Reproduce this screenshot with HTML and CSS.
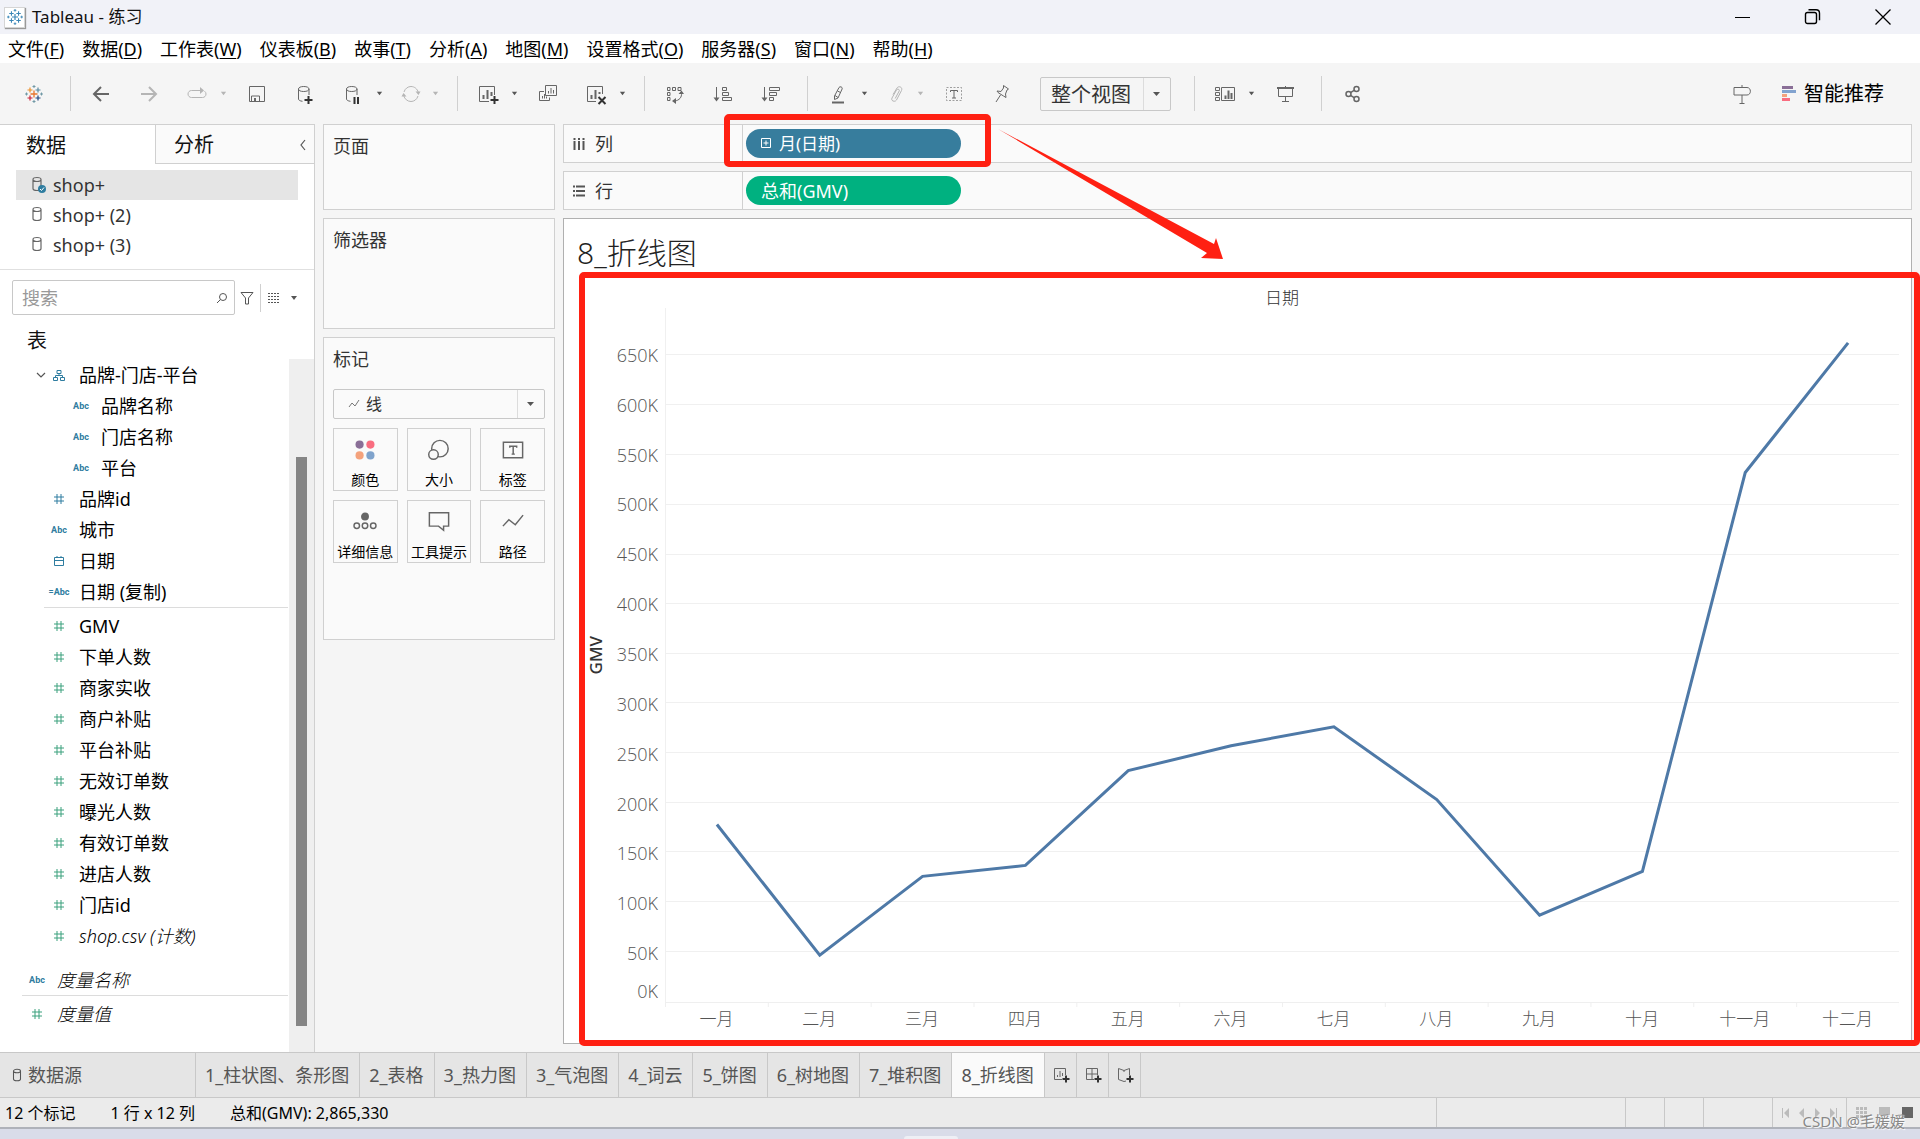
FILE: index.html
```html
<!DOCTYPE html>
<html lang="zh-CN">
<head>
<meta charset="utf-8">
<title>Tableau - 练习</title>
<link rel="stylesheet" href="styles.css">
</head>
<body>
<svg class="defs" aria-hidden="true">
  <symbol id="caret" viewBox="0 0 8 8"><path d="M1 2h6L4 6z" fill="currentColor"/></symbol>
  <symbol id="hash" viewBox="0 0 12 12"><path d="M4 1v10M8 1v10M1 4h10M1 8h10" fill="none" stroke="currentColor"/></symbol>
  <symbol id="db" viewBox="0 0 12 16"><path d="M2 3.5v9c0 1 1.500 2 4 2s4-1 4-2v-9M2 3.500C2 2.500 3.500 1.500 6 1.500s4 1 4 2-1.500 2-4 2-4-1-4-2z" fill="none" stroke="currentColor" stroke-width="1.200"/></symbol>
  <symbol id="logo" viewBox="0 0 18 18"><path d="M9 5.500v7M5.500 9h7" stroke="var(--c1)" stroke-width="1.300"/><path d="M5 2.500v5M2.500 5h5" stroke="var(--c2)" stroke-width="1.200"/><path d="M13 2.500v5M10.500 5h5" stroke="var(--c3)" stroke-width="1.200"/><path d="M5 10.500v5M2.500 13h5" stroke="var(--c4)" stroke-width="1.200"/><path d="M13 10.500v5M10.500 13h5" stroke="var(--c5)" stroke-width="1.200"/><path d="M9 0v3M7.500 1.500h3M9 15v3M7.500 16.500h3M1.500 7.500v3M0 9h3M16.500 7.500v3M15 9h3" stroke="var(--c6)"/></symbol>
</svg>

<header class="titlebar">
  <span class="app-icon"><svg width="16" height="16"><use href="#logo"/></svg></span>
  <span class="app-title">Tableau - 练习</span>
  <div class="window-buttons">
    <button aria-label="最小化"><svg width="18" height="18"><path d="M1 9.500h15" fill="none" stroke="#000"/></svg></button>
    <button aria-label="还原"><svg width="18" height="18"><rect x="1.500" y="4.500" width="11" height="11" rx="2" fill="none" stroke="#000" stroke-width="1.400"/><path d="M4.500 1.800h7.500c2 0 3.500 1.500 3.500 3.500v7" fill="none" stroke="#000" stroke-width="1.400"/></svg></button>
    <button aria-label="关闭"><svg width="18" height="18"><path d="M1.500 1.500l15 15M16.500 1.500l-15 15" fill="none" stroke="#000" stroke-width="1.300"/></svg></button>
  </div>
</header>

<nav class="menu">
  <a href="#">文件(<u>F</u>)</a><a href="#">数据(<u>D</u>)</a><a href="#">工作表(<u>W</u>)</a><a href="#">仪表板(<u>B</u>)</a><a href="#">故事(<u>T</u>)</a><a href="#">分析(<u>A</u>)</a><a href="#">地图(<u>M</u>)</a><a href="#">设置格式(<u>O</u>)</a><a href="#">服务器(<u>S</u>)</a><a href="#">窗口(<u>N</u>)</a><a href="#">帮助(<u>H</u>)</a>
</nav>

<div class="toolbar">
  <button class="tool color-logo" aria-label="起始页"><svg width="18" height="18"><use href="#logo"/></svg></button>
  <span class="sep"></span>
  <button class="tool" aria-label="撤消"><svg viewBox="0 0 24 24"><path d="M20 12H5M12 5l-7 7 7 7" stroke-width="2"/></svg></button>
  <button class="tool off" aria-label="重做"><svg viewBox="0 0 24 24"><path d="M4 12h15M12 5l7 7-7 7" stroke-width="2"/></svg></button>
  <button class="tool off" aria-label="重播"><svg viewBox="0 0 24 24"><path d="M16 8.500H6.500C4.500 8.500 3 10 3 12s1.500 3.500 3.500 3.500h11c2 0 3.500-1.500 3.500-3.500 0-1.200-.5-2-1.500-2.800"/><path class="fill" d="M15 5l4 3.500-4 3.500z"/></svg></button>
  <button class="drop off" aria-label="重播选项"><svg><use href="#caret"/></svg></button>
  <button class="tool" aria-label="保存"><svg viewBox="0 0 24 24"><path d="M4.500 4.500h15v15h-15zM6.500 19v-5h8v5"/><path class="fill" d="M9 16h2v3H9z"/></svg></button>
  <button class="tool" aria-label="新建数据源"><svg viewBox="0 0 24 24"><path d="M5.500 7v10c0 1.200 1.500 2 4 2.300M16 7v6M5.500 7c0-1.500 2-2.500 5.200-2.500S16 5.500 16 7s-2 2.500-5.300 2.500S5.500 8.500 5.500 7z"/><path class="dark" d="M15.500 14v8M11.500 18h8"/></svg></button>
  <button class="tool" aria-label="暂停自动更新"><svg viewBox="0 0 24 24"><path d="M5.500 7v10c0 1.200 1.500 2 4 2.300M16 7v6M5.500 7c0-1.500 2-2.500 5.200-2.500S16 5.500 16 7s-2 2.500-5.300 2.500S5.500 8.500 5.500 7z"/><path class="dark" d="M13.500 15v7M17 15v7"/></svg></button>
  <button class="drop" aria-label="更新选项"><svg><use href="#caret"/></svg></button>
  <button class="tool narrow off" aria-label="刷新"><svg viewBox="0 0 24 24"><path d="M5 10c1-3.500 4-5.500 7-5.500 3.500 0 6.500 2.500 7.300 6M19 14c-1 3.500-4 5.500-7 5.500-3.500 0-6.500-2.500-7.300-6"/><path class="fill" d="M16.500 9.500h5L19.500 13zM2.500 14.500h5L4.500 11z"/></svg></button>
  <button class="drop off" aria-label="刷新选项"><svg><use href="#caret"/></svg></button>
  <span class="sep"></span>
  <button class="tool" aria-label="新建工作表"><svg viewBox="0 0 24 24"><path d="M18.500 13V4.500h-15v15H13"/><path d="M7.500 17v-4M11.500 17V8M15.500 14v-4" stroke-width="2"/><path class="dark" d="M18.500 14v8M14.500 18h8"/></svg></button>
  <button class="drop" aria-label="新建选项"><svg><use href="#caret"/></svg></button>
  <button class="tool" aria-label="复制"><svg viewBox="0 0 24 24"><path d="M9.500 3.500h11v10h-11zM8 9.500H3.500v9h10v-3M12.500 11.500V9M15 11.500V6M17.500 11.500V8M6.500 16.500V14M8.500 16.500V12M10.500 16.500v-2"/></svg></button>
  <button class="tool" aria-label="清除工作表"><svg viewBox="0 0 24 24"><path d="M18.500 12V4.500h-15v15H12"/><path d="M7.500 17v-4M11.500 17V8M15.500 12v-2" stroke-width="2"/><path class="dark" d="M14.500 15l7 7M21.500 15l-7 7"/></svg></button>
  <button class="drop" aria-label="清除选项"><svg><use href="#caret"/></svg></button>
  <span class="sep"></span>
  <button class="tool" aria-label="交换行和列"><svg viewBox="0 0 24 24"><path d="M4.500 5.500h2.500v3H4.500zM9.500 5.500h3v3h-3zM15 5.500h3v3h-3zM4.500 10.500h2.500v3H4.500zM4.500 15.500h2.500v3H4.500zM18.500 11c.5 4-2 7.500-7 8"/><path class="fill" d="M15.500 12l3-3.500 2.500 3.500zM13 16l-4 3 4 3z"/></svg></button>
  <button class="tool" aria-label="升序排序"><svg viewBox="0 0 24 24"><path d="M5.500 5v12M11.500 5.500h4v3h-4zM11.500 10.500h6v3h-6zM11.500 15.500h9v3h-9z"/><path class="fill" d="M2.500 15.500h6l-3 4z"/></svg></button>
  <button class="tool" aria-label="降序排序"><svg viewBox="0 0 24 24"><path d="M5.500 5v12M10.500 5.500h10v3h-10zM10.500 10.500h7v3h-7zM10.500 15.500h4v3h-4z"/><path class="fill" d="M2.500 15.500h6l-3 4z"/></svg></button>
  <span class="sep"></span>
  <button class="tool" aria-label="突出显示"><svg viewBox="0 0 24 24"><path d="M8.500 14L13 5.500c.8-1.500 3.800-.5 3.200 1.300L12 16l-3.500 1.500zM9 13.500l3 2M11.500 9l3 1.500"/><path d="M6 20.500h12" stroke-width="2"/></svg></button>
  <button class="drop" aria-label="突出显示选项"><svg><use href="#caret"/></svg></button>
  <button class="tool narrow off" aria-label="组成员"><svg viewBox="0 0 24 24"><path d="M9 12.500l4-6.500c1.500-2.500 6-1 4.500 2.500L12.500 18c-1.500 2.500-6 1-4.500-2l4.500-8c1-1.800 3.500-.5 2.700 1l-4 7.500"/></svg></button>
  <button class="drop off" aria-label="组选项"><svg><use href="#caret"/></svg></button>
  <button class="tool" aria-label="显示标记标签"><svg viewBox="0 0 24 24"><path d="M4.500 5.500h15v13h-15z" stroke-dasharray="2 1.500" opacity=".6"/><path d="M8.500 10V8.500h7V10M12 8.500V16M10 16h4"/></svg></button>
  <button class="tool" aria-label="固定轴"><svg viewBox="0 0 24 24"><path d="M13.500 3.500l5 3.500-1.500 1-1.500 4 .5 3.500-2.500-1.500-5.500-3.500L7 9l4 .5L13.500 6zM10.500 13L6 20"/></svg></button>
  <select class="fit" aria-label="适合"><option>整个视图</option></select>
  <span class="sep"></span>
  <button class="tool" aria-label="显示/隐藏卡"><svg viewBox="0 0 24 24"><path d="M8.500 5.500h13v13h-13zM2.500 5.500h4v3h-4zM2.500 10.500h4v3h-4zM2.500 15.500h4v3h-4z"/><path d="M12.500 17v-3.500M15.500 17V8.500M18.500 17v-6" stroke-width="2"/></svg></button>
  <button class="drop" aria-label="卡选项"><svg><use href="#caret"/></svg></button>
  <button class="tool" aria-label="演示模式"><svg viewBox="0 0 24 24"><path d="M5.500 6v8.500h14V6M12.500 14.500V20M9 19.500h7M12.500 4v2"/><path d="M4 6h17" stroke-width="2"/></svg></button>
  <span class="sep"></span>
  <button class="tool" aria-label="共享"><svg viewBox="0 0 24 24"><g stroke-width="1.500"><circle cx="8.500" cy="12" r="2.500"/><circle cx="16.500" cy="7" r="2.500"/><circle cx="16.500" cy="17" r="2.500"/><path d="M10.500 10.700l4-2.500M10.500 13.300l4 2.500"/></g></svg></button>
  <button class="tool guide" aria-label="指南"><svg viewBox="0 0 24 24"><path d="M12 3v2M4 5.500h13c4.500 0 4.500 7.500 0 7.500H4zM12 13v8M9.500 21.500h5"/></svg></button>
  <button class="showme"><svg width="16" height="16"><path fill="#8a6f97" d="M0 0h11v3H0z"/><path fill="#82a3cf" d="M0 4h14v3H0z"/><path fill="#f4a27c" d="M0 8h5v3H0z"/><path fill="#f96d80" d="M0 12h8v3H0z"/></svg>智能推荐</button>
</div>

<main class="workspace">
  <aside class="side">
    <div class="side-tabs">
      <button class="side-tab active">数据</button>
      <button class="side-tab">分析<svg width="8" height="12"><path d="M6 1L2 6l4 5" fill="none" stroke="#555" stroke-width="1.200"/></svg></button>
    </div>
    <ul class="sources">
      <li class="selected"><svg width="16" height="18"><use href="#db" width="12" height="16"/><circle cx="11" cy="13" r="4" fill="#2f7da0"/><path d="M9 13l1.500 1.500 2.500-3" fill="none" stroke="#fff"/></svg>shop+</li>
      <li><svg width="16" height="18"><use href="#db" width="12" height="16"/></svg>shop+ (2)</li>
      <li><svg width="16" height="18"><use href="#db" width="12" height="16"/></svg>shop+ (3)</li>
    </ul>
    <div class="search-row">
      <label class="search"><input type="text" placeholder="搜索" aria-label="搜索"><svg width="12" height="12"><circle cx="7" cy="5" r="3.500" fill="none" stroke="#555"/><path d="M4.500 7.500L1 11" stroke="#555"/></svg></label>
      <button class="mini" aria-label="筛选"><svg width="14" height="14"><path d="M1 1.500h12L8.500 7v6h-3V7z" fill="none" stroke="#555"/></svg></button>
      <button class="mini layout" aria-label="查看方式"><svg width="12" height="12"><path d="M0 1.500h12M0 4.500h12M0 7.500h12M0 10.500h12" stroke="#555" stroke-dasharray="2 1"/></svg><svg class="tri"><use href="#caret"/></svg></button>
    </div>
    <h2>表</h2>
    <div class="fields">
      <ul class="field-list">
        <li class="folder"><svg class="chev" viewBox="0 0 12 12"><path d="M2 4l4 4 4-4" fill="none" stroke="#555" stroke-width="1.200"/></svg><span class="ico"><svg viewBox="0 0 12 12"><path d="M4 1.500h4v3H4zM.5 8.500h4v3h-4zM7.500 8.500h4v3h-4zM6 4.500v2M2.500 8.500v-2h7v2" fill="none" stroke="currentColor"/></svg></span>品牌-门店-平台</li>
        <li class="child"><span class="ico">Abc</span>品牌名称</li>
        <li class="child"><span class="ico">Abc</span>门店名称</li>
        <li class="child"><span class="ico">Abc</span>平台</li>
        <li><span class="ico"><svg><use href="#hash"/></svg></span>品牌id</li>
        <li><span class="ico">Abc</span>城市</li>
        <li><span class="ico"><svg viewBox="0 0 12 12"><path d="M1.500 2.500h9v8h-9zM1.500 5.500h9M4 1v2M8 1v2" fill="none" stroke="currentColor"/></svg></span>日期</li>
        <li><span class="ico">=Abc</span>日期 (复制)</li>
        <li class="rule" role="separator"></li>
        <li class="num"><span class="ico"><svg><use href="#hash"/></svg></span>GMV</li>
        <li class="num"><span class="ico"><svg><use href="#hash"/></svg></span>下单人数</li>
        <li class="num"><span class="ico"><svg><use href="#hash"/></svg></span>商家实收</li>
        <li class="num"><span class="ico"><svg><use href="#hash"/></svg></span>商户补贴</li>
        <li class="num"><span class="ico"><svg><use href="#hash"/></svg></span>平台补贴</li>
        <li class="num"><span class="ico"><svg><use href="#hash"/></svg></span>无效订单数</li>
        <li class="num"><span class="ico"><svg><use href="#hash"/></svg></span>曝光人数</li>
        <li class="num"><span class="ico"><svg><use href="#hash"/></svg></span>有效订单数</li>
        <li class="num"><span class="ico"><svg><use href="#hash"/></svg></span>进店人数</li>
        <li class="num"><span class="ico"><svg><use href="#hash"/></svg></span>门店id</li>
        <li class="num"><span class="ico"><svg><use href="#hash"/></svg></span><i>shop.csv (计数)</i></li>
        <li class="meta first"><span class="ico">Abc</span><i>度量名称</i></li>
        <li class="rule wide" role="separator"></li>
        <li class="meta num"><span class="ico"><svg><use href="#hash"/></svg></span><i>度量值</i></li>
      </ul>
      <div class="scrollbar"><div class="thumb"></div></div>
    </div>
  </aside>

  <div class="cards">
    <section class="card pages"><h3>页面</h3></section>
    <section class="card filters"><h3>筛选器</h3></section>
    <section class="card marks">
      <h3>标记</h3>
      <div class="mark-type">
        <svg width="12" height="10"><path d="M1 8l3-4 3 3 4-6" fill="none" stroke="#777"/></svg>
        <select aria-label="标记类型"><option>线</option></select>
      </div>
      <div class="mark-grid">
        <button><svg viewBox="0 0 24 24"><g stroke="none"><circle cx="5.500" cy="5.500" r="4.900" fill="#8a6f97"/><circle cx="18.500" cy="5.500" r="4.900" fill="#f96d80"/><circle cx="5.500" cy="18.500" r="4.900" fill="#f4a27c"/><circle cx="18.500" cy="18.500" r="4.900" fill="#7fa3cc"/></g></svg>颜色</button>
        <button><svg viewBox="0 0 24 24"><circle cx="13" cy="10.500" r="9"/><circle cx="6" cy="17" r="5.200" fill="#fafafa"/></svg>大小</button>
        <button><svg viewBox="0 0 24 24"><path d="M1.500 3.500h21v17h-21zM8.500 9.500V8h7.500v1.500M12.200 8v8.500M10.500 16.500h3.500"/></svg>标签</button>
        <button><svg viewBox="0 0 24 24"><circle cx="12" cy="6" r="3.500" fill="#666"/><circle cx="3" cy="16" r="3"/><circle cx="12" cy="16" r="3"/><circle cx="21" cy="16" r="3"/></svg>详细信息</button>
        <button><svg viewBox="0 0 24 24"><path d="M1.500 2h21v14.500h-5.500v4.500l-5.500-4.500h-10z"/></svg>工具提示</button>
        <button><svg viewBox="0 0 24 24"><path d="M1 16.500l6.500-7 7 5.500L23 4.500"/></svg>路径</button>
      </div>
    </section>
  </div>

  <div class="sheet">
    <div class="shelf">
      <div class="shelf-name"><svg width="12" height="12"><path d="M1.500 0v2M1.500 3v9M6 0v2M6 3v9M10.500 0v2M10.500 3v9" stroke="#555" stroke-width="2"/></svg>列</div>
      <button class="pill blue"><svg width="11" height="11"><path d="M.5.5h9v9h-9zM5 2.500v5M2.500 5h5" fill="none" stroke="#fff"/></svg>月(日期)</button>
      <div class="mark-box"></div>
      <svg class="arrow" width="226" height="132"><path d="M0 0l216 115 2-6 7 21-22-1 6-5z" fill="#ff2012"/></svg>
    </div>
    <div class="shelf">
      <div class="shelf-name"><svg width="12" height="12"><path d="M0 1.500h2M3 1.500h9M0 6h2M3 6h9M0 10.500h2M3 10.500h9" stroke="#555" stroke-width="2"/></svg>行</div>
      <button class="pill green">总和(GMV)</button>
    </div>
    <section class="view">
      <h1>8_折线图</h1>
      <div class="chart">
        <div class="field-title">日期</div>
        <div class="y-axis">
          <span class="y-title">GMV</span>
          <div class="y-labels">
            <span></span><span>650K</span><span>600K</span><span>550K</span><span>500K</span><span>450K</span><span>400K</span><span>350K</span><span>300K</span><span>250K</span><span>200K</span><span>150K</span><span>100K</span><span>50K</span><span>0K</span>
          </div>
        </div>
        <div class="plot">
          <svg viewBox="0 0 1235 696" preserveAspectRatio="none">
            <path class="grid" d="M0 47h1235M0 97h1235M0 147h1235M0 197h1235M0 247h1235M0 296h1235M0 346h1235M0 396h1235M0 446h1235M0 496h1235M0 545h1235M0 595h1235M0 645h1235"/>
            <polyline class="trend" points="51,518 154,649 257,570 360,559 463,464 566,439 669,420 772,493 875,609 978,565 1081,165 1184,35"/>
          </svg>
        </div>
        <div class="months">
          <span>一月</span><span>二月</span><span>三月</span><span>四月</span><span>五月</span><span>六月</span><span>七月</span><span>八月</span><span>九月</span><span>十月</span><span>十一月</span><span>十二月</span>
        </div>
      </div>
      <div class="chart-box"></div>
    </section>
  </div>
</main>

<nav class="sheet-tabs">
  <button class="source-tab"><svg width="12" height="14"><use href="#db"/></svg>数据源</button>
  <button>1_柱状图、条形图</button><button>2_表格</button><button>3_热力图</button><button>3_气泡图</button><button>4_词云</button><button>5_饼图</button><button>6_树地图</button><button>7_堆积图</button><button class="active">8_折线图</button>
  <button class="add" aria-label="新建工作表"><svg viewBox="0 0 18 18"><path d="M12.500 9V2.500h-11v11H9M4.500 11V9M7 11V5M9.500 10V7"/><path class="dark" d="M13 9.500v7M9.500 13h7"/></svg></button>
  <button class="add" aria-label="新建仪表板"><svg viewBox="0 0 18 18"><path d="M12.500 9V2.500h-11v11H9M7 2.500v11M1.500 8h11"/><path class="dark" d="M13 9.500v7M9.500 13h7"/></svg></button>
  <button class="add" aria-label="新建故事"><svg viewBox="0 0 18 18"><path d="M12.500 9V2.500L7 4.500 1.500 2.500v11l5.500 2 2-.5M7 4.500v1.500"/><path class="dark" d="M13 9.500v7M9.500 13h7"/></svg></button>
</nav>

<footer class="status">
  <span class="count">12 个标记</span><span class="count">1 行 x 12 列</span><span>总和(GMV): 2,865,330</span>
  <div class="cells">
    <span class="c-long"></span><span class="c-short"></span><span class="c-short"></span><span class="c-mid"></span>
    <span class="c-nav"><svg width="60" height="10"><path fill="#bbb" d="M0 0h1v10H0zM7 0v10L2 5zM22 0v10l-5-5zM33 0v10l5-5zM48 0v10l5-5zM54 0h1v10h-1z"/></svg></span>
    <span class="c-nav"><svg width="58" height="12"><path fill="#bbb" d="M0 0h3v3H0zM4 0h3v3H4zM8 0h3v3H8zM0 4h3v3H0zM4 4h3v3H4zM8 4h3v3H8zM0 8h3v3H0zM4 8h3v3H4zM8 8h3v3H8zM23 0h11v8H23z"/><path fill="#666" d="M46 0h11v11H46z"/></svg></span>
  </div>
  <span class="watermark">CSDN @毛媛媛</span>
</footer>
<div class="desktop"><span></span></div>
</body>
</html>
```

FILE: styles.css
```css
* { box-sizing: border-box; }
body {
  margin: 0;
  min-height: 100vh;
  display: flex;
  flex-direction: column;
  background: #f5f5f5;
  color: #111;
  font: 18px/24px "Noto Sans", "Noto Sans CJK SC", sans-serif;
}
button, select, input { font: inherit; color: inherit; }
button { border: 0; padding: 0; background: none; }
ul { list-style: none; margin: 0; padding: 0; }
h1, h2, h3 { margin: 0; font-weight: 400; }
h3 { font-size: 18px; }
svg { flex: none; }
.defs { position: absolute; width: 0; height: 0; }

.titlebar { display: flex; align-items: center; height: 34px; padding-left: 4px; background: #f1f2f8; font-size: 17px; }
.app-icon {
  --c1: #3a86b7; --c2: #3a86b7; --c3: #3a86b7; --c4: #3a86b7; --c5: #3a86b7; --c6: #3a86b7;
  display: grid; place-items: center; width: 21px; height: 21px; margin-right: 7px;
  background: #fff; border: 1px solid #d5d5d5; box-shadow: 1px 1px 1px #999;
}
.window-buttons { display: flex; margin-left: auto; padding-right: 2px; }
.window-buttons button { display: grid; place-items: center; width: 70px; height: 34px; }

.menu { display: flex; gap: 18px; height: 29px; padding-left: 8px; align-items: center; background: #fff; }
.menu a { color: #000; text-decoration: none; white-space: nowrap; }
.menu u { text-underline-offset: 2px; }

.toolbar { display: flex; align-items: center; gap: 4px; height: 61px; padding: 0 36px 0 12px; }
.tool { width: 44px; height: 36px; display: grid; place-items: center; color: #666; }
.tool svg { fill: none; stroke: currentColor; width: 24px; height: 24px; }
.tool.narrow { width: 40px; }
.color-logo { --c1: #e8762c; --c2: #eb912c; --c3: #5a8aa0; --c4: #c72037; --c5: #1f457e; --c6: #7199a6; }
.color-logo svg { width: 18px; height: 18px; }
svg .fill { fill: currentColor; stroke: none; }
svg .dark { stroke: #333; stroke-width: 2; }
.off { color: #b5b5b5; }
.drop { width: 16px; height: 36px; margin-left: -8px; display: grid; place-items: center; color: #555; }
.drop.off { color: #b5b5b5; }
.drop svg { width: 7px; height: 7px; }
.sep { width: 1px; height: 35px; margin: 0 4px 0 10px; background: #d0d0d0; }
select {
  appearance: none; border: 1px solid #c8c8c8; border-radius: 2px;
  background: url("data:image/svg+xml,%3Csvg xmlns='http://www.w3.org/2000/svg' width='27' height='34'%3E%3Cpath d='M.5 0v34' stroke='%23dcdcdc'/%3E%3Cpath d='M10 15h7l-3.500 4z' fill='%23555'/%3E%3C/svg%3E") right center no-repeat;
}
.fit { width: 131px; height: 34px; margin: 0 9px 0 12px; padding: 2px 30px 0 10px; font-size: 20px; line-height: 28px; color: #333; }
.guide { margin-left: auto; }
.showme { display: flex; align-items: center; gap: 6px; margin-left: 14px; font-size: 20px; color: #000; }

.workspace { flex: 1; display: flex; align-items: stretch; }
.side { width: 315px; display: flex; flex-direction: column; background: #fff; border: 1px solid #d0d0d0; border-width: 1px 1px 0 0; }
.side-tabs { display: grid; grid-template-columns: 155px 1fr; height: 39px; font-size: 20px; }
.side-tab { display: flex; align-items: center; padding: 2px 7px 0 26px; }
.side-tab:not(.active) { padding-left: 18px; justify-content: space-between; background: #fafafa; border: 1px solid #d0d0d0; border-width: 0 0 1px 1px; }
.sources { padding: 6px 16px 9px; border-bottom: 1px solid #e0e0e0; }
.sources li { display: flex; align-items: center; gap: 6px; height: 30px; padding-left: 15px; color: #333; }
.sources svg { color: #666; }
.sources .selected { background: #e5e5e5; }
.search-row { display: flex; align-items: center; padding: 10px 0 0 12px; }
.search { display: flex; align-items: center; width: 223px; height: 35px; padding: 0 6px 0 9px; border: 1px solid #c8c8c8; border-radius: 2px; }
.search input { flex: 1; min-width: 0; border: 0; padding: 0; outline: 0; background: none; }
.search input::placeholder { color: #999; }
.mini { display: flex; align-items: center; height: 28px; padding: 0 6px 0 5px; }
.mini.layout { gap: 10px; padding-left: 7px; border-left: 1px solid #d0d0d0; color: #555; }
.tri { width: 8px; height: 8px; }
.side h2 { height: 44px; padding: 14px 0 0 27px; font-size: 20px; }
.fields { flex: 1; display: flex; }
.field-list { flex: 1; }
.field-list li { display: flex; align-items: center; gap: 8px; height: 31px; padding-left: 47px; color: #000; white-space: nowrap; }
.field-list .child { padding-left: 69px; }
.field-list .meta { padding-left: 25px; }
.field-list .folder { padding-left: 35px; }
.folder .chev { width: 12px; height: 12px; margin-right: -8px; }
.field-list .first { margin-top: 13px; }
.field-list .rule { height: 1px; margin: 0 1px 2px 44px; background: #dcdcdc; }
.field-list .wide { margin-left: 22px; }
.field-list i { font-weight: 300; }
.ico { display: flex; justify-content: center; width: 24px; color: #2f7da0; font: 700 9px/12px Roboto, sans-serif; }
.ico svg { width: 12px; height: 12px; }
.num .ico { color: #3aa07c; }
.scrollbar { width: 25px; padding: 98px 7px 26px; background: #efefef; display: flex; }
.thumb { flex: 1; background: #858585; }

.cards { width: 232px; margin: 0 8px; display: flex; flex-direction: column; gap: 8px; color: #333; }
.card { padding: 9px; background: #fafafa; border: 1px solid #d0d0d0; }
.pages { height: 86px; }
.filters { height: 111px; }
.marks { height: 303px; }
.mark-type { position: relative; margin-top: 18px; }
.mark-type svg { position: absolute; left: 15px; top: 10px; }
.mark-type select { display: block; width: 100%; height: 30px; padding: 0 30px 0 32px; font-size: 16px; line-height: 24px; }
.mark-grid { display: grid; grid-template-columns: repeat(3, 1fr); gap: 9px; margin-top: 9px; }
.mark-grid button { display: flex; flex-direction: column; align-items: center; gap: 9px; height: 63px; padding-top: 9px; border: 1px solid #d0d0d0; font-size: 14px; line-height: 18px; color: #000; white-space: nowrap; }
.mark-grid svg { width: 22px; height: 24px; fill: none; stroke: #666; stroke-width: 1.6; overflow: visible; }
.mark-grid button:first-child svg { width: 20px; }

.sheet { flex: 1; min-width: 0; display: flex; flex-direction: column; gap: 8px; padding: 0 8px 8px 0; }
.shelf { position: relative; display: flex; align-items: center; height: 39px; background: #fafafa; border: 1px solid #d0d0d0; }
.shelf-name { display: flex; align-items: center; gap: 10px; width: 179px; height: 37px; padding-left: 9px; border-right: 1px solid #d0d0d0; color: #333; }
.pill { display: flex; align-items: center; gap: 7px; width: 215px; height: 29px; margin-left: 3px; padding-left: 15px; border-radius: 15px; color: #fff; font-size: 17px; }
.blue { background: #377d9d; }
.green { background: #00b180; font-size: 18px; }
.mark-box { position: absolute; left: 160px; top: -11px; width: 267px; height: 53px; border: 6px solid #ff2012; border-radius: 5px; }
.arrow { position: absolute; left: 434px; top: 4px; z-index: 1; }

.view { position: relative; flex: 1; display: flex; flex-direction: column; background: #fff; border: 1px solid #b0b0b0; }
.view h1 { height: 69px; padding: 14px 0 0 13px; font-size: 30px; line-height: 40px; font-weight: 300; color: #222; }
.chart { flex: 1; display: grid; grid-template: 20px 1fr 40px / 101px 1fr; padding-right: 12px; color: #555; font-weight: 300; font-size: 17px; line-height: 20px; }
.field-title { grid-column: 2; text-align: center; color: #333; }
.y-axis { grid-column: 1; display: flex; justify-content: space-between; padding: 0 7px 0 22px; }
.y-title { align-self: center; writing-mode: vertical-rl; transform: rotate(180deg); font-weight: 500; color: #333; }
.y-labels { display: grid; grid-template-rows: 22fr repeat(13, 50fr) 25fr; align-items: center; text-align: right; font-family: "Open Sans", sans-serif; font-size: 18px; }
.plot { position: relative; border-left: 1px solid #f0f0f0; border-bottom: 1px solid #efefef; }
.plot svg { position: absolute; inset: 0; width: 100%; height: 100%; }
.plot path, .plot polyline { fill: none; vector-effect: non-scaling-stroke; }
.grid { stroke: #f0f0f0; shape-rendering: crispEdges; }
.trend { stroke: #4e79a7; stroke-width: 3; }
.months { grid-column: 2; display: grid; grid-template-columns: repeat(12, 1fr); text-align: center; background: linear-gradient(90deg, #efefef 1px, transparent 1px) 0 0 / calc(100% / 12) 4px repeat-x; }
.months span { padding-top: 6px; }
.chart-box { position: absolute; left: 15px; top: 53px; right: -9px; bottom: -3px; border: 6px solid #ff2012; border-radius: 5px; }

.sheet-tabs { display: flex; height: 46px; background: #e5e5e5; border: 1px solid #c8c8c8; border-width: 1px 0; color: #555; }
.sheet-tabs button { display: flex; align-items: center; padding: 0 10px 0 9px; border-right: 1px solid #c8c8c8; white-space: nowrap; }
.sheet-tabs .source-tab { width: 196px; gap: 5px; padding-left: 11px; }
.sheet-tabs .active { background: #fafafa; }
.sheet-tabs .add { width: 32px; padding: 0 0 0 8px; }
.add svg { width: 18px; height: 18px; fill: none; stroke: #666; }
.status { position: relative; display: flex; height: 31px; padding-left: 5px; background: #ebebeb; border-bottom: 2px solid #afb2ba; font-size: 16px; line-height: 30px; color: #000; }
.count { margin-right: 35px; }
.cells { display: flex; margin-left: auto; }
.cells span { display: flex; align-items: center; border-left: 1px solid #c8c8c8; }
.c-long { width: 189px; }
.c-short { width: 39px; }
.c-mid { width: 69px; }
.c-nav { width: 74px; padding-left: 9px; }
.watermark { position: absolute; right: 15px; bottom: -4px; font-size: 15px; line-height: 20px; color: #888; text-shadow: 1px 1px 1px #fff; }
.desktop { display: flex; align-items: flex-end; height: 10px; padding-left: 904px; background: #d9dce9; }
.desktop span { width: 54px; height: 3px; border-radius: 3px 3px 0 0; background: #eeeff5; }
```
